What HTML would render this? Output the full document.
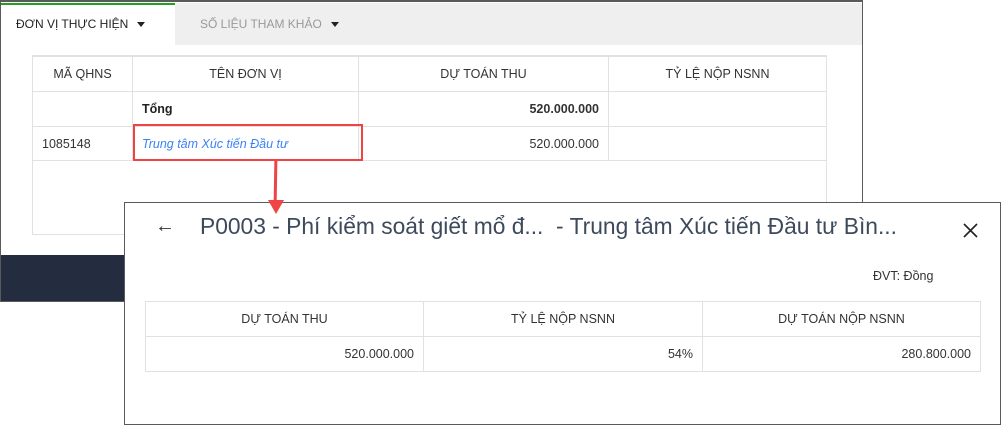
<!DOCTYPE html>
<html><head><meta charset="utf-8"><style>
*{margin:0;padding:0;box-sizing:border-box}
body{width:1002px;height:425px;background:#fff;position:relative;overflow:hidden;font-family:"Liberation Sans",sans-serif;color:#333}
.abs{position:absolute}
table{border-collapse:collapse;position:absolute;table-layout:fixed}
td{border:1px solid #dfe1e5;font-size:12.5px;padding:0 9px;color:#333}
</style></head><body>
<div class="abs" style="left:0;top:0;width:863px;height:302px;border:1px solid #5a5a5a;border-top:2px solid #5a5a5a;background:#fff"></div>
<div class="abs" style="left:1px;top:3px;width:174px;height:2px;background:#20a020"></div>
<div class="abs" style="left:175px;top:3px;width:687px;height:42px;background:#efefef"></div>
<div class="abs" style="left:16px;top:17px;font-size:12px;color:#222">ĐƠN VỊ THỰC HIỆN</div>
<div class="abs" style="left:137px;top:22px;border-left:4px solid transparent;border-right:4px solid transparent;border-top:5px solid #222"></div>
<div class="abs" style="left:200px;top:17px;font-size:12px;color:#999">SỐ LIỆU THAM KHẢO</div>
<div class="abs" style="left:331px;top:22px;border-left:4px solid transparent;border-right:4px solid transparent;border-top:5px solid #222"></div>
<div class="abs" style="left:32px;top:55px;width:795px;height:180px;border:1px solid #dfe1e5;border-top:2px solid #dfe1e5"></div>
<table style="left:32px;top:56px;width:795px">
<tr style="height:35px"><td style="width:100px;text-align:center">MÃ QHNS</td><td style="width:226px;text-align:center">TÊN ĐƠN VỊ</td><td style="width:250px;text-align:center">DỰ TOÁN THU</td><td style="text-align:center">TỶ LỆ NỘP NSNN</td></tr>
<tr style="height:35px"><td></td><td style="font-weight:bold;color:#222">Tổng</td><td style="text-align:right;font-weight:bold">520.000.000</td><td></td></tr>
<tr style="height:34px"><td>1085148</td><td style="color:#3b82f6;font-style:italic">Trung tâm Xúc tiến Đầu tư</td><td style="text-align:right">520.000.000</td><td></td></tr>
</table>
<div class="abs" style="left:133px;top:124px;width:230px;height:37px;border:2px solid #f04444"></div>
<div class="abs" style="left:1px;top:255px;width:862px;height:46px;background:#242d3f"></div>
<div class="abs" style="left:124px;top:202px;width:877px;height:223px;border:1px solid #5a5a5a;background:#fff"></div>
<div class="abs" style="left:274px;top:161px;width:3px;height:42px;background:#f04444;transform:rotate(1deg)"></div>
<div class="abs" style="left:268px;top:200px;border-left:8px solid transparent;border-right:8px solid transparent;border-top:14px solid #f04444"></div>
<div class="abs" style="left:155px;top:215px;font-size:20px;color:#333">←</div>
<div class="abs" style="left:200px;top:213px;font-size:22.8px;color:#3d4a5c;white-space:nowrap">P0003 - Phí kiểm soát giết mổ đ...&nbsp; - Trung tâm Xúc tiến Đầu tư Bìn...</div>
<svg class="abs" style="left:963px;top:223px" width="15" height="15"><path d="M1 1L14 14M14 1L1 14" stroke="#222" stroke-width="1.6"/></svg>
<div class="abs" style="left:873px;top:269px;font-size:12.5px;color:#333">ĐVT: Đồng</div>
<table style="left:145px;top:301px;width:836px">
<tr style="height:35px"><td style="width:278px;text-align:center">DỰ TOÁN THU</td><td style="width:279px;text-align:center">TỶ LỆ NỘP NSNN</td><td style="text-align:center">DỰ TOÁN NỘP NSNN</td></tr>
<tr style="height:35px"><td style="text-align:right">520.000.000</td><td style="text-align:right">54%</td><td style="text-align:right">280.800.000</td></tr>
</table>
</body></html>
